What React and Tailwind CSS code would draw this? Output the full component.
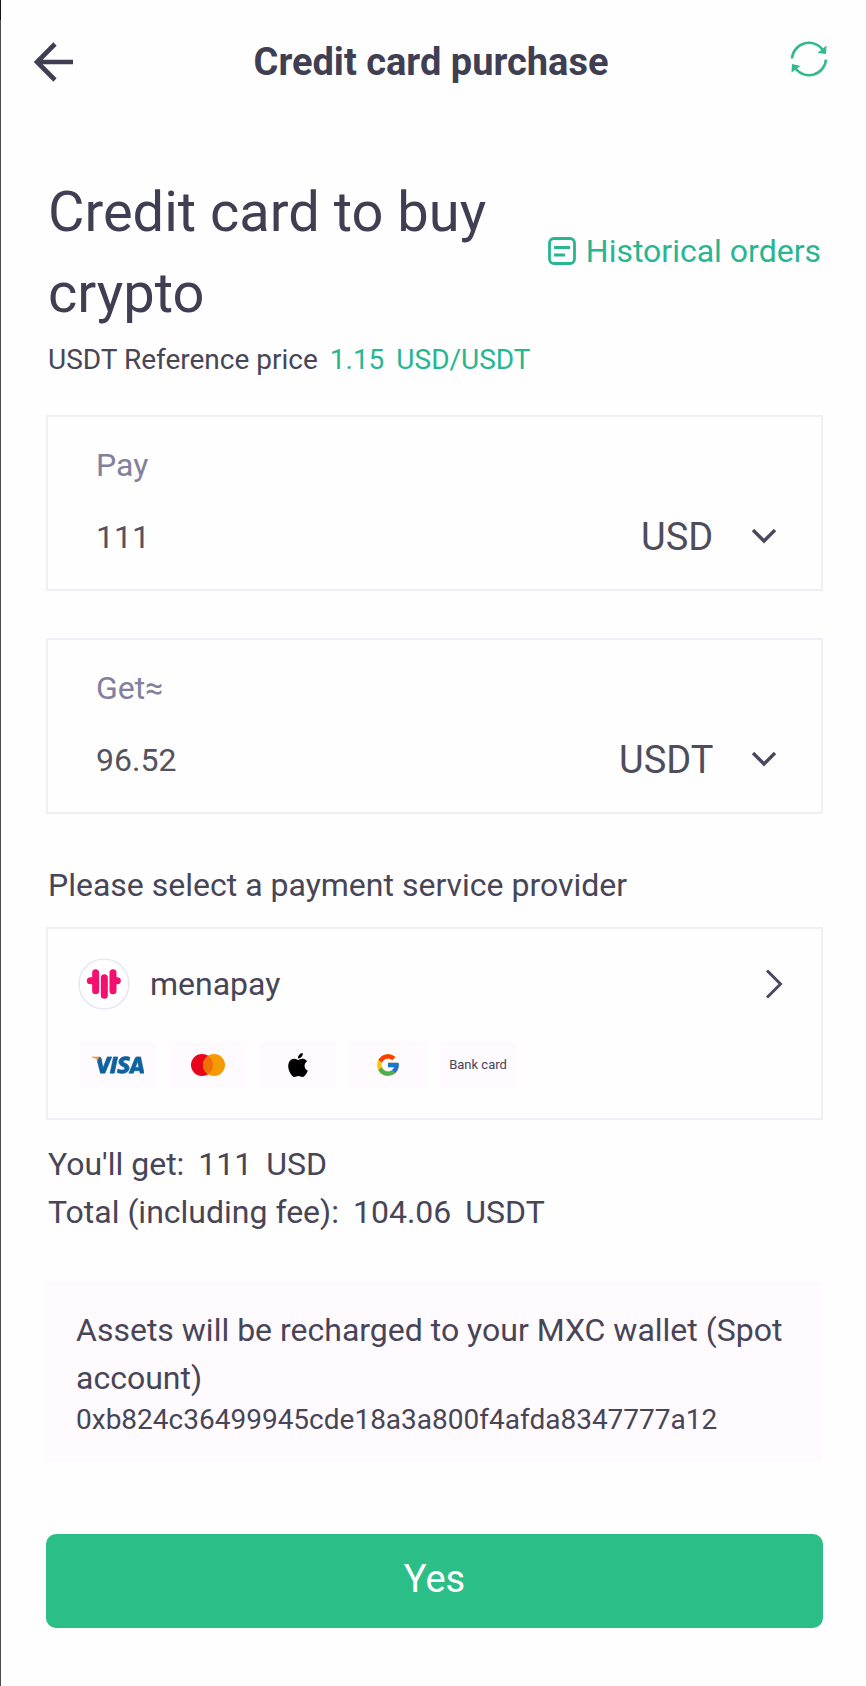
import { SiApple, SiVisa } from "react-icons/si";
import { FcGoogle } from "react-icons/fc";

const BackIcon = () => (
  <svg width="40" height="40" viewBox="0 0 40 40" fill="none" stroke="currentColor" strokeWidth="4.600" aria-hidden="true">
    <path d="M40 20H4M22 2 4 20l18 18" />
  </svg>
);

const RefreshIcon = () => (
  <svg width="40" height="40" viewBox="0 0 40 40" fill="none" stroke="currentColor" strokeWidth="2.600" aria-hidden="true">
    <path d="M3 18.500A17 17 0 0 1 33.500 9.500" />
    <path d="M37 19.500A17 17 0 0 1 6.500 28.500" />
    <path d="M37.500 5.500l-.5 8.500-8.500-1z" fill="currentColor" stroke="none" />
    <path d="M2.500 32.500l.5-8.500 8.500 2z" fill="currentColor" stroke="none" />
  </svg>
);

const OrdersIcon = () => (
  <svg width="28" height="28" viewBox="0 0 28 28" fill="none" stroke="currentColor" strokeWidth="2.800" aria-hidden="true">
    <rect x="1.500" y="1.500" width="25" height="25" rx="4.500" />
    <path d="M6 10.500h16M6 18h11" />
  </svg>
);

const ChevronDown = () => (
  <svg className="pointer-events-none absolute right-0.5 top-4" width="26" height="16" viewBox="0 0 26 16" fill="none" stroke="#4b4960" strokeWidth="3.400" aria-hidden="true">
    <path d="M2 1l11 11L24 1" />
  </svg>
);

const ChevronRight = () => (
  <svg width="18" height="30" viewBox="0 0 18 30" fill="none" stroke="#4b4960" strokeWidth="3" aria-hidden="true">
    <path d="M2 1.500L15.500 15 2 28.500" />
  </svg>
);

const MenapayLogo = () => (
  <svg width="52" height="52" viewBox="25 53 156 156" aria-hidden="true">
    <circle cx="103" cy="131" r="75" fill="#fff" stroke="#e9e8f3" strokeWidth="5" />
    <g fill="none" stroke="#f4106e" strokeWidth="21" strokeLinecap="round">
      <path d="M62 121h16M78 97v54M104 112v53M130 97v54M130 121h13" />
    </g>
  </svg>
);

const Mastercard = () => (
  <svg width="34" height="22" viewBox="0 0 34 22" role="img" aria-label="Mastercard">
    <circle cx="11" cy="11" r="11" fill="#e8051b" />
    <circle cx="23" cy="11" r="11" fill="#f59a05" />
    <path d="M17 1.800a11 11 0 0 1 0 18.400 11 11 0 0 1 0-18.400z" fill="#f07005" />
  </svg>
);

const Visa = () => (
  <>
    <svg width="0" height="0" className="absolute" aria-hidden="true">
      <linearGradient id="visa-fill" gradientUnits="userSpaceOnUse" x1="0" y1="8" x2="4" y2="10">
        <stop offset="0.6" stopColor="#f0a04b" />
        <stop offset="0.8" stopColor="#0f629f" />
      </linearGradient>
    </svg>
    <SiVisa size={52} strokeWidth="0.3" className="fill-[url(#visa-fill)] stroke-[url(#visa-fill)]" aria-label="Visa" />
  </>
);

function AmountCard({ id, label, value, currency }) {
  return (
    <div className="border-2 border-[#efeef9] px-12 pt-6 pb-7">
      <label htmlFor={id} className="block text-[32px] leading-12 text-[#82809d]">{label}</label>
      <div className="mt-6 flex h-12 items-center justify-between">
        <input id={id} defaultValue={value} inputMode="decimal" className="min-w-0 flex-1 bg-transparent text-[32px] leading-12 text-[#54525f] outline-none" />
        <div className="relative -mr-1.5 shrink-0">
          <select aria-label={`${label} currency`} className="h-12 appearance-none bg-transparent pr-[65px] text-[38px] leading-12 text-[#4f4d5c] outline-none">
            <option>{currency}</option>
          </select>
          <ChevronDown />
        </div>
      </div>
    </div>
  );
}

const Badge = ({ children }) => (
  <span className="flex h-[46px] w-[76px] items-center justify-center bg-[#fefafd]">{children}</span>
);

export default function App() {
  return (
    <div className="flex min-h-screen bg-[#fefefe] font-[Roboto,sans-serif] text-[#474556]">
      <div className="flex w-px flex-col bg-[#4c4c50]">
        <span className="h-5 bg-[#14141f]" />
      </div>
      <div className="min-w-0 flex-1">
        <header className="flex h-[124px] items-center justify-between pr-[37px] pl-8 text-[#403e52]">
          <button type="button" aria-label="Back"><BackIcon /></button>
          <h1 className="text-[38px] leading-12 font-bold">Credit card purchase</h1>
          <button type="button" aria-label="Refresh" className="pb-1 text-[#34b98a]"><RefreshIcon /></button>
        </header>

        <main className="pr-[43px] pb-14 pl-[45px] pt-12">
          <div className="flex items-center justify-between px-0.5">
            <h2 className="max-w-[460px] text-[56px] leading-[81px] text-[#403e52]">Credit card to buy crypto</h2>
            <a href="#orders" className="flex shrink-0 items-center gap-2.5 pb-1 text-[32px] leading-12 text-[#28b592]">
              <OrdersIcon />
              Historical orders
            </a>
          </div>
          <p className="mt-1.5 flex gap-3 px-0.5 text-[28px] leading-10">
            <span>USDT Reference price</span>
            <span className="flex gap-3 text-[#28b592]"><span>1.15</span><span>USD/USDT</span></span>
          </p>

          <div className="mt-[35px] flex flex-col gap-[47px]">
            <AmountCard id="pay" label="Pay" value="111" currency="USD" />
            <AmountCard id="get" label="Get≈" value="96.52" currency="USDT" />
          </div>

          <p className="mt-[47px] px-0.5 text-[32px] leading-12">Please select a payment service provider</p>
          <button type="button" className="mt-[18px] block w-full border-2 border-[#efeef9] px-[30px] pt-[29px] pb-[30px] text-left">
            <span className="flex items-center justify-between pr-2">
              <span className="flex items-center gap-5 text-[32px] leading-12">
                <MenapayLogo />
                menapay
              </span>
              <ChevronRight />
            </span>
            <span className="mt-8 flex gap-[14px] pl-0.5">
              <Badge><Visa /></Badge>
              <Badge><Mastercard /></Badge>
              <Badge><SiApple size={24} color="#000" aria-label="Apple Pay" /></Badge>
              <Badge><FcGoogle size={26} aria-label="Google Pay" /></Badge>
              <Badge><span className="text-[13px] leading-4 whitespace-nowrap">Bank card</span></Badge>
            </span>
          </button>

          <div className="mt-5 px-0.5 text-[32px] leading-12">
            <p className="flex gap-3.5"><span>You'll get:</span><span>111</span><span>USD</span></p>
            <p className="flex gap-3.5"><span>Total (including fee):</span><span>104.06</span><span>USDT</span></p>
          </div>

          <div className="mt-[46px] bg-[#fefafe] px-[30px] pt-6 pb-[25px]">
            <p className="text-[32px] leading-12">Assets will be recharged to your MXC wallet (Spot account)</p>
            <p className="text-[28px] leading-9 break-all">0xb824c36499945cde18a3a800f4afda8347777a12</p>
          </div>

          <button type="button" className="mt-[71px] h-[94px] w-full rounded-[10px] bg-[#2bbf87] pb-1 text-[38px] text-white">Yes</button>
        </main>
      </div>
    </div>
  );
}
